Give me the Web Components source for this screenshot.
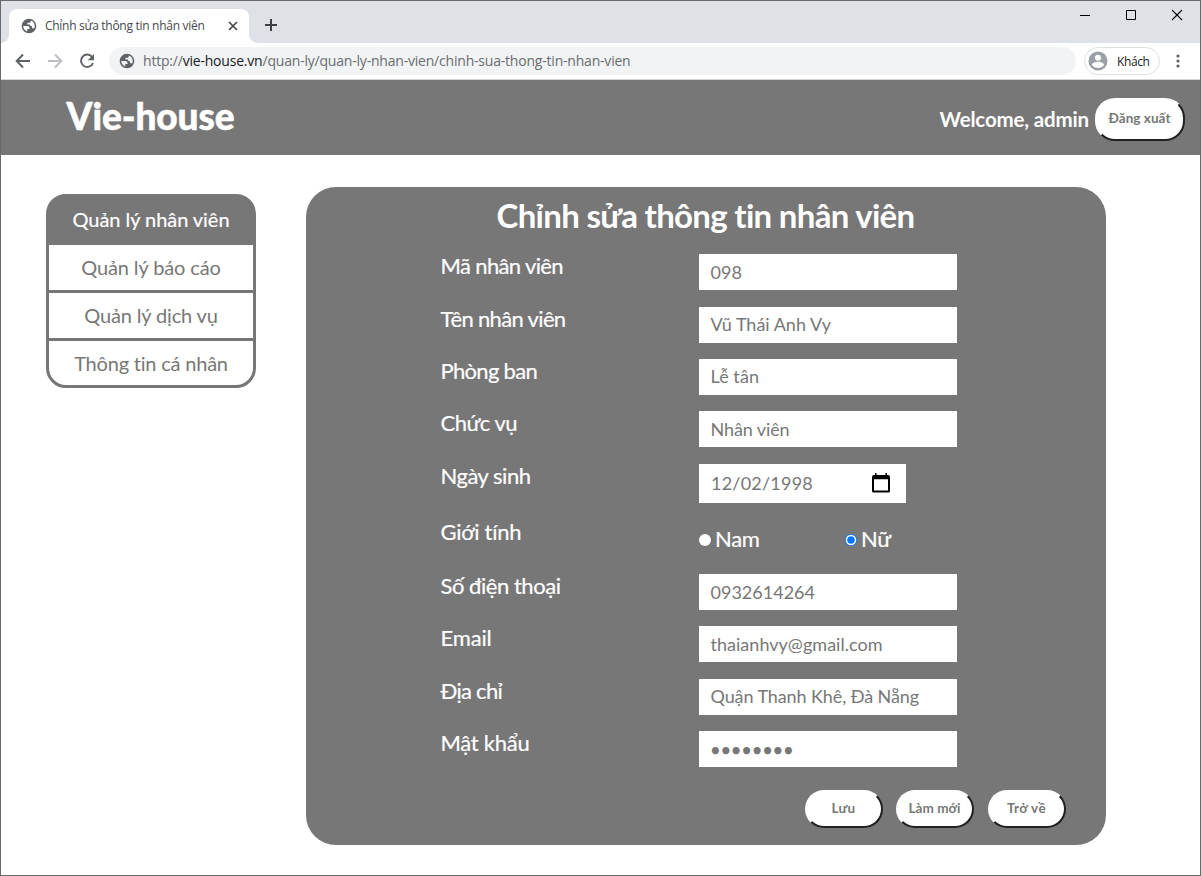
<!DOCTYPE html>
<html lang="vi">
<head>
<meta charset="utf-8">
<title>Chỉnh sửa thông tin nhân viên</title>
<style>
html,body{margin:0;height:100%;overflow:hidden;background:#fff}
body{font-family:Lato,sans-serif;color:#fff}
</style>
</head>
<body>
<browser-window>
  <browser-tabs slot="tabs"></browser-tabs>
  <browser-toolbar slot="toolbar"></browser-toolbar>
  <site-header></site-header>
  <site-main></site-main>
</browser-window>
<script>
const define = (name, html, setup) => customElements.define(name, class extends HTMLElement {
  constructor() {
    super();
    this.attachShadow({mode: 'open'}).innerHTML = html;
  }
  connectedCallback() { if (setup) setup.call(this); }
});

const GLOBE = `<path fill-rule="evenodd" d="M12 2C6.480 2 2 6.480 2 12s4.480 10 10 10 10-4.480 10-10S17.520 2 12 2zM4 12h5.500c2.600 0 3.500 1.500 3.300 4.200H9.600v3.200C6.300 18.400 4 15.500 4 12zM14.500 4.600v1c0 1.200-.9 2.100-2.200 2.100H9.800v2.200h3.400c.6 2 1.300 2.600 3 2.600v2.500h3.100c1.600-4 .1-8.800-4.800-10.400z" fill="#5f6368"/>`;

/* Line of text tracked to a set width */
define('fit-text', `<style>:host{display:inline-block;white-space:nowrap}</style><slot></slot>`, function () {
  const target = +this.getAttribute('width');
  const n = [...this.textContent].length;
  const w = this.getBoundingClientRect().width;
  if (target && n) this.style.letterSpacing = ((target - w) / n).toFixed(3) + 'px';
});

define('browser-window', `<style>
:host{display:flex;flex-direction:column;box-sizing:border-box;width:1201px;height:876px;border:1px solid #6a6a6a;background:#fff}
</style><slot name="tabs"></slot><slot name="toolbar"></slot><slot></slot>`);

define('browser-tabs', `<style>
:host{display:flex;height:42px;background:#dee1e6;font:12px "Open Sans",sans-serif;color:#45484c;box-sizing:border-box;padding-left:8px}
.tab{position:relative;display:flex;align-items:center;box-sizing:border-box;width:240px;height:34px;margin-top:8px;padding:0 10px 0 12px;background:#fff;border-radius:8px 8px 0 0}
.tab:before,.tab:after{content:"";position:absolute;bottom:0;width:8px;height:8px}
.tab:before{left:-8px;background:radial-gradient(circle at 0 0,transparent 7.5px,#fff 8px)}
.tab:after{right:-8px;background:radial-gradient(circle at 100% 0,transparent 7.5px,#fff 8px)}
.title{flex:1;margin-left:8px;line-height:34px}
svg{display:block}
.plus{margin:17px 0 0 15px}
.win{margin-left:auto;display:flex;gap:30px;padding:6px 15px 0 0}
</style>
<div class="tab"><svg width="16" height="16" viewBox="1 1 22 22">${GLOBE}</svg><span class="title"><fit-text width="159.500">Chỉnh sửa thông tin nhân viên</fit-text></span>
<svg width="12" height="12" viewBox="0 0 12 12"><path d="M2 2l8 8M10 2l-8 8" stroke="#45484c" stroke-width="1.700"/></svg></div>
<svg class="plus" width="14" height="14" viewBox="0 0 14 14"><path d="M7 1v12M1 7h12" stroke="#3c4043" stroke-width="2"/></svg>
<div class="win">
<svg width="16" height="16"><path d="M3 8.500h10" stroke="#000"/></svg>
<svg width="16" height="16"><path d="M3.500 3.500h9v9h-9z" fill="none" stroke="#000"/></svg>
<svg width="16" height="16"><path d="M3 3l10 10M13 3L3 13" stroke="#000" stroke-width="1.100"/></svg>
</div>`);

define('browser-toolbar', `<style>
:host{display:flex;align-items:center;height:37px;box-sizing:border-box;border-bottom:1px solid #d5d5d5;padding:0 14px 0 14px;font:14px "Open Sans",sans-serif;color:#6a6d71}
svg{display:block;flex:none}
.nav{display:flex;gap:16px}
.url{display:flex;align-items:center;box-sizing:border-box;width:967px;height:28px;margin-left:14px;border-radius:14px;background:#f1f3f4;padding-left:10px;gap:8px;line-height:28px}
b{font-weight:400;color:#202124}
.user{display:flex;align-items:center;box-sizing:border-box;width:76px;height:28px;margin-left:8px;border:1px solid #dfe1e5;border-radius:14px;padding-left:3px;gap:9px;font-size:12px;color:#202124}
.more{margin-left:10px}
</style>
<div class="nav">
<svg width="16" height="16"><path d="M15 8H2M8 1.500L1.700 8 8 14.500" fill="none" stroke="#5f6368" stroke-width="2"/></svg>
<svg width="16" height="16"><path d="M1 8h13M8 1.500L14.300 8 8 14.500" fill="none" stroke="#bdbfc2" stroke-width="2"/></svg>
<svg width="16" height="16"><path d="M13.300 4.200A6.200 6.200 0 1 0 14 10" fill="none" stroke="#5f6368" stroke-width="2"/><path d="M15 1v6.300H8.700z" fill="#5f6368"/></svg>
</div>
<div class="url"><svg width="16" height="16" viewBox="1 1 22 22">${GLOBE}</svg><fit-text width="487.500">http://<b>vie-house.vn</b>/quan-ly/quan-ly-nhan-vien/chinh-sua-thong-tin-nhan-vien</fit-text></div>
<div class="user"><svg width="20" height="20" viewBox="0 0 20 20"><circle cx="10" cy="10" r="9.500" fill="#9aa0a6"/><circle cx="10" cy="6.700" r="3" fill="#fff"/><path d="M4 14c0-2.200 3.500-3.300 6-3.300s6 1.100 6 3.300c-1.300 1.900-3.500 3-6 3s-4.700-1.100-6-3z" fill="#fff"/></svg><fit-text width="32.500">Khách</fit-text></div>
<svg class="more" width="16" height="16"><g fill="#5f6368"><circle cx="8" cy="3" r="1.600"/><circle cx="8" cy="8" r="1.600"/><circle cx="8" cy="13" r="1.600"/></g></svg>`);

define('pill-button', `<style>
:host{display:block;width:var(--w,78px);height:var(--h,38px)}
button{display:block;box-sizing:border-box;width:100%;height:100%;margin:0;padding:0 1px 2px 0;border:2px solid;border-color:#fff #212121 #212121 #fff;border-radius:var(--r,20px);background:#fff;color:#777;font:bold 13.500px Lato,sans-serif}
</style><button><slot></slot></button>`);

define('site-header', `<style>
:host{display:flex;align-items:center;height:75px;box-sizing:border-box;background:#777;padding:0 15px 0 65.500px;font-weight:700}
.logo{flex:1;font-size:37px;line-height:74px;height:77px;font-weight:900;-webkit-text-stroke:.5px #fff}
.hi{font-size:20.500px;margin:2px 6px 0 0;line-height:78px}
pill-button{--w:90px;--h:43px;--r:20px;margin-top:3px}
</style><span class="logo"><fit-text width="168">Vie-house</fit-text></span><span class="hi"><fit-text width="149.500">Welcome, admin</fit-text></span><pill-button><fit-text width="62">Đăng xuất</fit-text></pill-button>`);

define('side-menu', `<style>
:host{display:block;box-sizing:border-box;width:210px;height:194px;border:3px solid #777;border-radius:20px;overflow:hidden;background:#777;color:#777;font-size:20px;text-align:center}
div{height:45px;line-height:44px;background:#fff;margin-bottom:3px}
.on{background:#777;color:#fff;-webkit-text-stroke:.2px #fff}
</style><div class="on"><fit-text width="157">Quản lý nhân viên</fit-text></div><div><fit-text width="139.500">Quản lý báo cáo</fit-text></div><div><fit-text width="133.500">Quản lý dịch vụ</fit-text></div><div><fit-text width="154">Thông tin cá nhân</fit-text></div>`);

define('form-row', `<style>
:host{display:flex;height:52px;font-size:22px;-webkit-text-stroke:.2px #fff}
.label{width:258.500px;margin-left:-.5px;line-height:24px}
</style><span class="label"><slot name="label"></slot></span><slot></slot>`);

define('text-box', `<style>
:host{display:flex;align-items:center;box-sizing:border-box;width:258px;height:36px;padding:0 0 1px 11.500px;background:#fff;color:#777;font-size:18px;-webkit-text-stroke:0}
:host([raised]){padding-bottom:3px}
:host([date]){width:207px;height:39px;justify-content:space-between;padding:0 15px 1px 12px}
:host([password]){font-size:14.500px;padding:0 0 0 12px}
</style><slot></slot>`);

define('radio-option', `<style>
:host{display:flex;align-items:center;gap:4px;height:26px;width:146px;margin-top:5px}
svg{display:block;margin-top:4px}
</style><svg width="12" height="12"><circle cx="6" cy="6" r="6" fill="#fff"/></svg><slot></slot>`, function () {
  if (this.hasAttribute('checked'))
    this.shadowRoot.querySelector('svg').innerHTML = '<circle cx="6" cy="6" r="6" fill="#0075ff"/><circle cx="6" cy="6" r="4.500" fill="none" stroke="#fff" stroke-width="1.500"/>';
});

define('employee-form', `<style>
:host{display:flex;flex-direction:column;box-sizing:border-box;width:800px;height:658px;border-radius:30px;background:#777;padding:0 40px 0 135px}
h1{margin:0 40px 0 -135px;width:799px;height:67px;font-size:33px;line-height:56px;text-align:center}
.actions{display:flex;justify-content:flex-end;gap:13px;margin-top:7px}
</style>
<h1><fit-text width="418.500">Chỉnh sửa thông tin nhân viên</fit-text></h1>
<form-row style="height:53px"><fit-text slot="label" width="122.500">Mã nhân viên</fit-text><text-box><fit-text width="31.500">098</fit-text></text-box></form-row>
<form-row><fit-text slot="label" width="125">Tên nhân viên</fit-text><text-box raised><fit-text width="120.500">Vũ Thái Anh Vy</fit-text></text-box></form-row>
<form-row><fit-text slot="label" width="96.500">Phòng ban</fit-text><text-box raised><fit-text width="48.500">Lễ tân</fit-text></text-box></form-row>
<form-row style="height:53px"><fit-text slot="label" width="76.500">Chức vụ</fit-text><text-box><fit-text width="79">Nhân viên</fit-text></text-box></form-row>
<form-row style="height:56px"><fit-text slot="label" width="90">Ngày sinh</fit-text><text-box date><fit-text width="102">12/02/1998</fit-text><svg width="20" height="20" style="flex:none"><path d="M4 0h1.500v2h9V0H16v2h1q2 0 2 2v14q0 1.500-1.500 1.500h-15Q1 19.500 1 18V4q0-2 2-2h1zM3 6.300v11.200h14V6.300z" fill="#000" fill-rule="evenodd"/></svg></text-box></form-row>
<form-row style="height:54px"><fit-text slot="label" width="81">Giới tính</fit-text><radio-option><fit-text width="44.500">Nam</fit-text></radio-option><radio-option checked><fit-text width="30">Nữ</fit-text></radio-option></form-row>
<form-row><fit-text slot="label" width="120">Số điện thoại</fit-text><text-box><fit-text width="104.500">0932614264</fit-text></text-box></form-row>
<form-row style="height:53px"><fit-text slot="label" width="51">Email</fit-text><text-box><fit-text width="172">thaianhvy@gmail.com</fit-text></text-box></form-row>
<form-row><fit-text slot="label" width="61.500">Địa chỉ</fit-text><text-box raised><fit-text width="208.500">Quận Thanh Khê, Đà Nẵng</fit-text></text-box></form-row>
<form-row><fit-text slot="label" width="89">Mật khẩu</fit-text><text-box password><fit-text width="83.500">●●●●●●●●</fit-text></text-box></form-row>
<div class="actions"><pill-button><fit-text width="24">Lưu</fit-text></pill-button><pill-button><fit-text width="52">Làm mới</fit-text></pill-button><pill-button style="margin-left:1px"><fit-text width="39">Trở về</fit-text></pill-button></div>`);

define('site-main', `<style>
:host{display:flex;align-items:flex-start;gap:50px;padding:32px 0 0 45px}
side-menu{margin-top:7px}
</style><side-menu></side-menu><employee-form></employee-form>`);
</script>
</body>
</html>
